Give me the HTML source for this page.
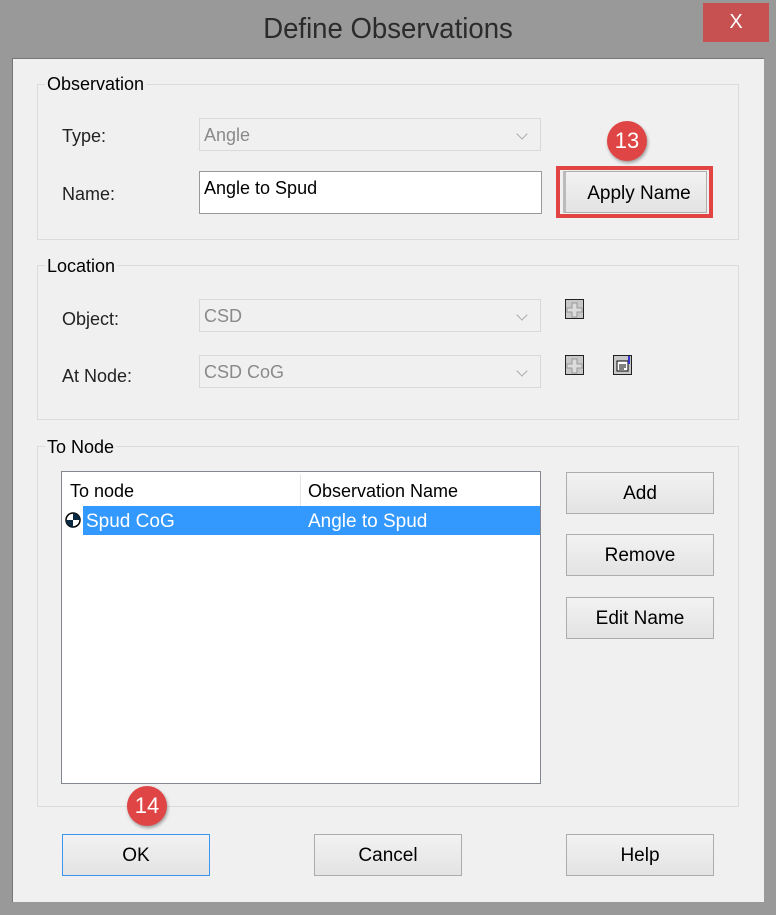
<!DOCTYPE html>
<html><head><meta charset="utf-8"><style>
*{box-sizing:border-box;margin:0;padding:0}
body{width:776px;height:915px;background:#999;position:relative;overflow:hidden;font-family:"Liberation Sans",Arial,sans-serif;font-size:19px;color:#000}
.a{position:absolute}
#title{left:0;top:13px;width:776px;text-align:center;font-size:29px;color:#2b2b2b;font-family:"Liberation Sans",sans-serif;transform:scaleX(0.95)}
#close{left:703px;top:3px;width:66px;height:39px;background:#c75050;color:#fff;font-size:20px;text-align:center;line-height:39px}
#content{left:12px;top:58px;width:752px;height:844px;background:#f0f0f0;border-left:1px solid #777;border-top:1px solid #777}
.grp{position:absolute;border:1px solid #dcdcdc}
.gl{position:absolute;background:#f0f0f0;padding:0 2px;font-size:18px}
.lbl{position:absolute;font-size:18px;color:#222}
.combo{position:absolute;border:1px solid #d9d9d9;background:#f0f0f0;color:#8a8a8a;font-size:18px;padding:6px 0 0 4px}
.combo:after{content:"";position:absolute;right:14px;top:11px;width:7px;height:7px;border-right:1.5px solid #aaa;border-bottom:1.5px solid #aaa;transform:rotate(45deg)}
.btn{position:absolute;border:1px solid #adadad;background:linear-gradient(#f2f2f2,#e3e3e3);text-align:center;font-size:19px}
.ib{position:absolute;width:19px;height:20px;border:1px solid #222;background:#c8c8c8}
.badge{position:absolute;width:40px;height:40px;border-radius:50%;background:#e04545;color:#fff;font-size:22px;text-align:center;line-height:40px;box-shadow:1px 2px 3px rgba(0,0,0,.35)}
</style></head><body>
<div class="a" id="title">Define Observations</div>
<div class="a" id="close">X</div>
<div class="a" id="content"></div>

<div class="grp" style="left:37px;top:84px;width:702px;height:156px"></div>
<div class="gl" style="left:45px;top:74px">Observation</div>
<div class="lbl" style="left:62px;top:126px">Type:</div>
<div class="combo" style="left:199px;top:118px;width:342px;height:33px">Angle</div>
<div class="lbl" style="left:62px;top:184px">Name:</div>
<div class="a" style="left:199px;top:171px;width:343px;height:43px;background:#fff;border:1px solid #999;padding:6px 4px;font-size:18px">Angle to Spud</div>
<div class="a" style="left:556px;top:166px;width:157px;height:52px;border:4px solid #e24444"></div>
<div class="btn" style="left:563px;top:171px;width:144px;height:42px;line-height:44px;border-left:3px solid #bbb;padding-left:6px">Apply Name</div>
<div class="badge" style="left:607px;top:121px">13</div>

<div class="grp" style="left:37px;top:265px;width:702px;height:155px"></div>
<div class="gl" style="left:45px;top:256px">Location</div>
<div class="lbl" style="left:62px;top:309px">Object:</div>
<div class="combo" style="left:199px;top:299px;width:342px;height:33px">CSD</div>
<div class="lbl" style="left:62px;top:366px">At Node:</div>
<div class="combo" style="left:199px;top:355px;width:342px;height:33px">CSD CoG</div>
<div class="ib" style="left:565px;top:299px"><svg width="17" height="18"><path d="M6 3h5v5h5v4h-5v5H6v-5H1V8h5z" fill="#ddd" stroke="#999"/></svg></div>
<div class="ib" style="left:565px;top:355px"><svg width="17" height="18"><path d="M6 3h5v5h5v4h-5v5H6v-5H1V8h5z" fill="#ddd" stroke="#999"/></svg></div>
<div class="ib" style="left:613px;top:355px"><svg width="17" height="18"><rect x="3" y="5" width="11" height="10" fill="#fff" stroke="#000"/><path d="M5 9h7M5 11h7M5 13h5" stroke="#000"/><path d="M15 0v8" stroke="#33c" stroke-width="2"/></svg></div>

<div class="grp" style="left:37px;top:446px;width:702px;height:361px"></div>
<div class="gl" style="left:45px;top:437px">To Node</div>
<div class="a" style="left:61px;top:471px;width:480px;height:313px;background:#fff;border:1px solid #828790"></div>
<div class="a" style="left:62px;top:474px;width:239px;height:32px;border-right:1px solid #e5e5e5;padding:7px 8px;font-size:18px">To node</div>
<div class="a" style="left:301px;top:474px;width:239px;height:32px;padding:7px 7px;font-size:18px">Observation Name</div>
<div class="a" style="left:83px;top:506px;width:457px;height:29px;background:#3399ff"></div>
<div class="a" style="left:86px;top:511px;color:#fff;font-size:19px">Spud CoG</div>
<div class="a" style="left:308px;top:511px;color:#fff;font-size:19px">Angle to Spud</div>
<div class="a" style="left:65px;top:512px"><svg width="16" height="16"><circle cx="8" cy="8" r="7" fill="#fff" stroke="#000" stroke-width="1.5"/><path d="M8 8V1A7 7 0 0 1 15 8zM8 8v7A7 7 0 0 1 1 8z" fill="#0a2a44"/></svg></div>

<div class="btn" style="left:566px;top:472px;width:148px;height:42px;line-height:42px">Add</div>
<div class="btn" style="left:566px;top:534px;width:148px;height:42px;line-height:42px">Remove</div>
<div class="btn" style="left:566px;top:597px;width:148px;height:42px;line-height:42px">Edit Name</div>

<div class="btn" style="left:62px;top:834px;width:148px;height:42px;line-height:42px;border-color:#3c96f0">OK</div>
<div class="btn" style="left:314px;top:834px;width:148px;height:42px;line-height:42px">Cancel</div>
<div class="btn" style="left:566px;top:834px;width:148px;height:42px;line-height:42px">Help</div>
<div class="badge" style="left:127px;top:786px">14</div>
</body></html>
